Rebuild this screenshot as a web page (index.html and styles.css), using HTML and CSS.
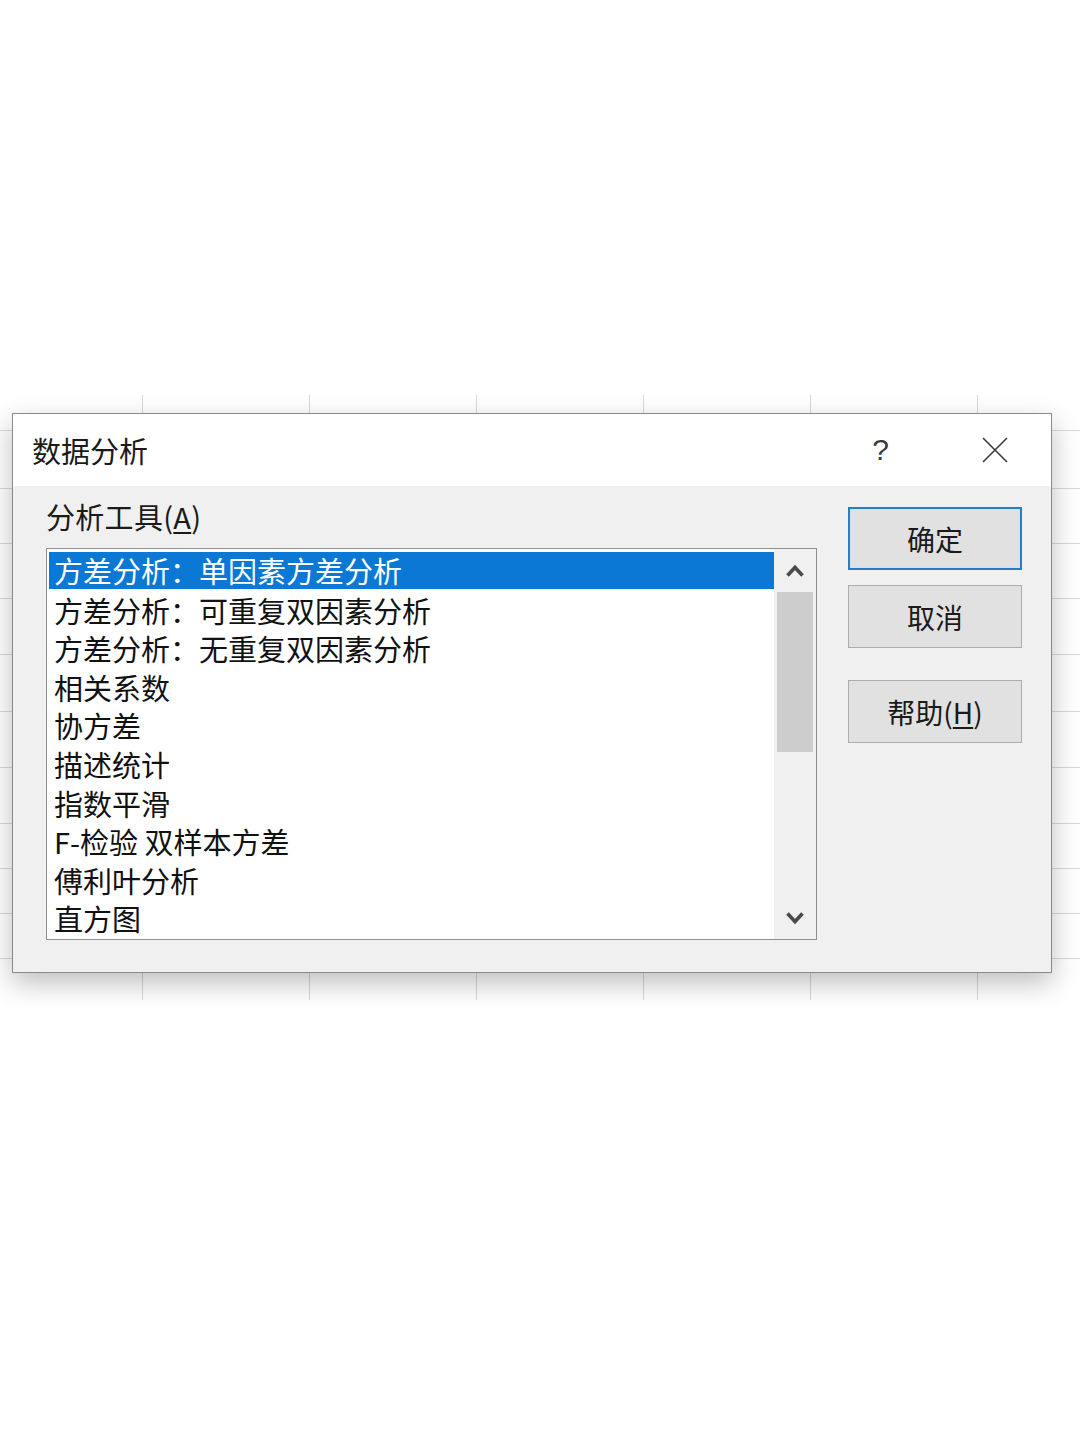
FILE: index.html
```html
<!DOCTYPE html>
<html lang="zh-CN">
<head>
<meta charset="utf-8">
<title>数据分析</title>
<link rel="stylesheet" href="styles.css">
</head>
<body>
<div class="sheet">
  <div class="row r1"></div>
  <div class="row r2"></div>
  <div class="row r3"></div>
  <div class="row r4"></div>
  <div class="row r5"></div>
  <div class="row r6"></div>
  <div class="row r7"></div>
  <div class="row r8"></div>
  <div class="row r9"></div>
  <div class="row r10"></div>
  <div class="row r11"></div>
  <div class="row r12"></div>

  <div class="dialog">
    <div class="titlebar">
      <div class="title">数据分析</div>
      <div class="help">?</div>
      <svg class="close" width="28" height="28" viewBox="0 0 28 28">
        <path d="M2 2 L26 26 M26 2 L2 26" stroke="#3a3a3a" stroke-width="1.6" fill="none"/>
      </svg>
    </div>
    <div class="client">
      <div class="leftcol">
        <div class="label">分析工具(<u>A</u>)</div>
        <div class="listbox">
          <div class="items">
            <div class="item selected">方差分析：单因素方差分析</div>
            <div class="item">方差分析：可重复双因素分析</div>
            <div class="item">方差分析：无重复双因素分析</div>
            <div class="item">相关系数</div>
            <div class="item">协方差</div>
            <div class="item">描述统计</div>
            <div class="item">指数平滑</div>
            <div class="item">F-检验 双样本方差</div>
            <div class="item">傅利叶分析</div>
            <div class="item">直方图</div>
          </div>
          <div class="scrollbar">
            <div class="arrow">
              <svg width="20" height="14" viewBox="0 0 20 14"><path d="M2.5 11.5 L10 3.5 L17.5 11.5" stroke="#4a4a4a" stroke-width="3.6" fill="none"/></svg>
            </div>
            <div class="track">
              <div class="thumb"></div>
            </div>
            <div class="arrow">
              <svg width="20" height="14" viewBox="0 0 20 14"><path d="M2.5 2.5 L10 10.5 L17.5 2.5" stroke="#4a4a4a" stroke-width="3.6" fill="none"/></svg>
            </div>
          </div>
        </div>
      </div>
      <div class="buttons">
        <div class="btn default">确定</div>
        <div class="btn">取消</div>
        <div class="btn help-btn">帮助(<u>H</u>)</div>
      </div>
    </div>
  </div>
</div>
</body>
</html>
```

FILE: styles.css
```css
html, body {
  margin: 0;
  padding: 0;
  background: #ffffff;
}
body {
  width: 1080px;
  height: 1440px;
  font-family: "Noto Sans CJK SC", "Microsoft YaHei", sans-serif;
  color: #111;
}
.sheet {
  position: relative;
  margin-top: 395px;
  width: 1080px;
  height: 605px;
  background-image: linear-gradient(to right, #d8d8d8 1px, transparent 1px);
  background-size: 167px 100%;
  background-position: 142px 0;
}
.row {
  box-sizing: border-box;
  border-bottom: 1px solid #d8d8d8;
}
.r1 { height: 36px; }
.r2 { height: 58px; }
.r3 { height: 55px; }
.r4 { height: 55px; }
.r5 { height: 56px; }
.r6 { height: 57px; }
.r7 { height: 56px; }
.r8 { height: 56px; }
.r9 { height: 45px; }
.r10 { height: 45px; }
.r11 { height: 45px; }
.r12 { height: 40px; border-bottom: none; }

.dialog {
  position: absolute;
  top: 18px;
  left: 12px;
  width: 1040px;
  height: 560px;
  box-sizing: border-box;
  border: 1px solid #8a8a8a;
  background: #f0f0f0;
  box-shadow: 0 10px 26px rgba(0, 0, 0, 0.26);
  display: flex;
  flex-direction: column;
}
.titlebar {
  height: 72px;
  background: #ffffff;
  display: flex;
  align-items: center;
  padding-left: 19px;
}
.title {
  font-size: 29px;
  line-height: 40px;
  flex: 1;
  color: #1a1a1a;
}
.help {
  font-family: "Liberation Sans", sans-serif;
  font-size: 30px;
  line-height: 40px;
  color: #3a3a3a;
  margin-right: 92px;
}
.close {
  margin-right: 42px;
}
.client {
  flex: 1;
  display: flex;
  padding-left: 33px;
}
.leftcol {
  display: flex;
  flex-direction: column;
}
.label {
  margin-top: 10px;
  font-size: 29px;
  line-height: 40px;
  height: 40px;
  color: #1a1a1a;
  letter-spacing: 0.3px;
}
.listbox {
  margin-top: 12px;
  width: 771px;
  height: 392px;
  box-sizing: border-box;
  border: 1px solid #8e8e8e;
  background: #ffffff;
  display: flex;
}
.items {
  flex: 1;
  padding-top: 3px;
  padding-left: 2px;
}
.item {
  height: 38.6px;
  line-height: 38.6px;
  font-size: 29px;
  padding-left: 5px;
  color: #111;
  white-space: nowrap;
}
.item.selected {
  background: #0a78d4;
  color: #ffffff;
  height: 37px;
  line-height: 37px;
  margin-bottom: 1.6px;
}
.scrollbar {
  width: 42px;
  background: #f0f0f0;
  display: flex;
  flex-direction: column;
}
.arrow {
  height: 43px;
  display: flex;
  align-items: center;
  justify-content: center;
}
.track {
  flex: 1;
  padding: 0 3px;
}
.thumb {
  height: 160px;
  background: #cdcdcd;
}
.buttons {
  margin-left: 31px;
  padding-top: 21px;
  display: flex;
  flex-direction: column;
  width: 174px;
}
.btn {
  box-sizing: border-box;
  height: 63px;
  border: 1px solid #adadad;
  background: #e1e1e1;
  font-size: 28px;
  display: flex;
  align-items: center;
  justify-content: center;
  color: #1a1a1a;
  margin-bottom: 15px;
}
.btn.default {
  border: 2px solid #2a7dc4;
  box-shadow: inset 0 0 0 1px #cde4f6;
}
.btn.help-btn {
  margin-top: 17px;
}
u {
  text-decoration-thickness: 1.5px;
  text-underline-offset: 3px;
}
```
